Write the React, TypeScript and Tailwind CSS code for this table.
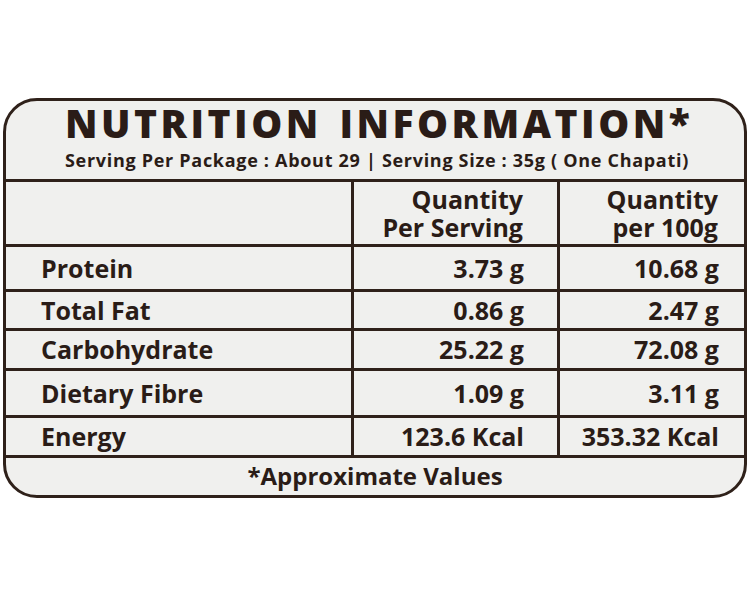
import React from "react";

const rows = [
  { label: "Protein", a: "3.73 g", b: "10.68 g", h: "h-[42px]" },
  { label: "Total Fat", a: "0.86 g", b: "2.47 g", h: "h-[36px]" },
  { label: "Carbohydrate", a: "25.22 g", b: "72.08 g", h: "h-[37px]" },
  { label: "Dietary Fibre", a: "1.09 g", b: "3.11 g", h: "h-[44px]" },
  { label: "Energy", a: "123.6 Kcal", b: "353.32 Kcal", h: "h-[37px]" },
];

export default function App() {
  return (
    <div
      className="w-[752px] h-[600px] bg-white pt-[98px] pl-[3px]"
      style={{ fontFamily: '"Open Sans", "Noto Sans", sans-serif' }}
    >
      <div className="w-[744px] h-[400px] rounded-[34px] border-[3px] border-[#2f211a] bg-[#f0f0ee] text-[#2a1c17] flex flex-col">
        <div className="h-[78px] pl-[59px] flex flex-col">
          <div className="text-[39px] font-extrabold leading-[44px] tracking-[3.5px] [word-spacing:4px] whitespace-nowrap">
            NUTRITION INFORMATION*
          </div>
          <div className="text-[18px] font-bold leading-none tracking-[0.7px] mt-[6px] whitespace-nowrap">
            Serving Per Package : About 29 | Serving Size : 35g ( One Chapati)
          </div>
        </div>
        <div className="border-t-[3px] border-[#2f211a] flex flex-col">
          <div className="flex h-[65px] border-b-[3px] border-[#2f211a]">
            <div className="w-[348px] border-r-[3px] border-[#2f211a]" />
            <div className="w-[206px] border-r-[3px] border-[#2f211a] flex items-center justify-end pr-[34px] text-[25px] font-bold leading-[28px] text-right">
              <p>
                Quantity
                <br />
                Per Serving
              </p>
            </div>
            <div className="flex-1 flex items-center justify-end pr-[26px] text-[25px] font-bold leading-[28px] text-right">
              <p>
                Quantity
                <br />
                per 100g
              </p>
            </div>
          </div>
          {rows.map((r) => (
            <div
              key={r.label}
              className={`flex ${r.h} box-content border-b-[3px] border-[#2f211a] text-[25px] font-bold leading-none`}
            >
              <div className="w-[348px] border-r-[3px] border-[#2f211a] flex items-center pl-[35px]">
                {r.label}
              </div>
              <div className="w-[206px] border-r-[3px] border-[#2f211a] flex items-center justify-end pr-[33px]">
                {r.a}
              </div>
              <div className="flex-1 flex items-center justify-end pr-[25px]">{r.b}</div>
            </div>
          ))}
        </div>
        <div className="flex-1 flex items-center justify-center text-[24px] font-bold leading-none pb-[2px]">
          *Approximate Values
        </div>
      </div>
    </div>
  );
}
